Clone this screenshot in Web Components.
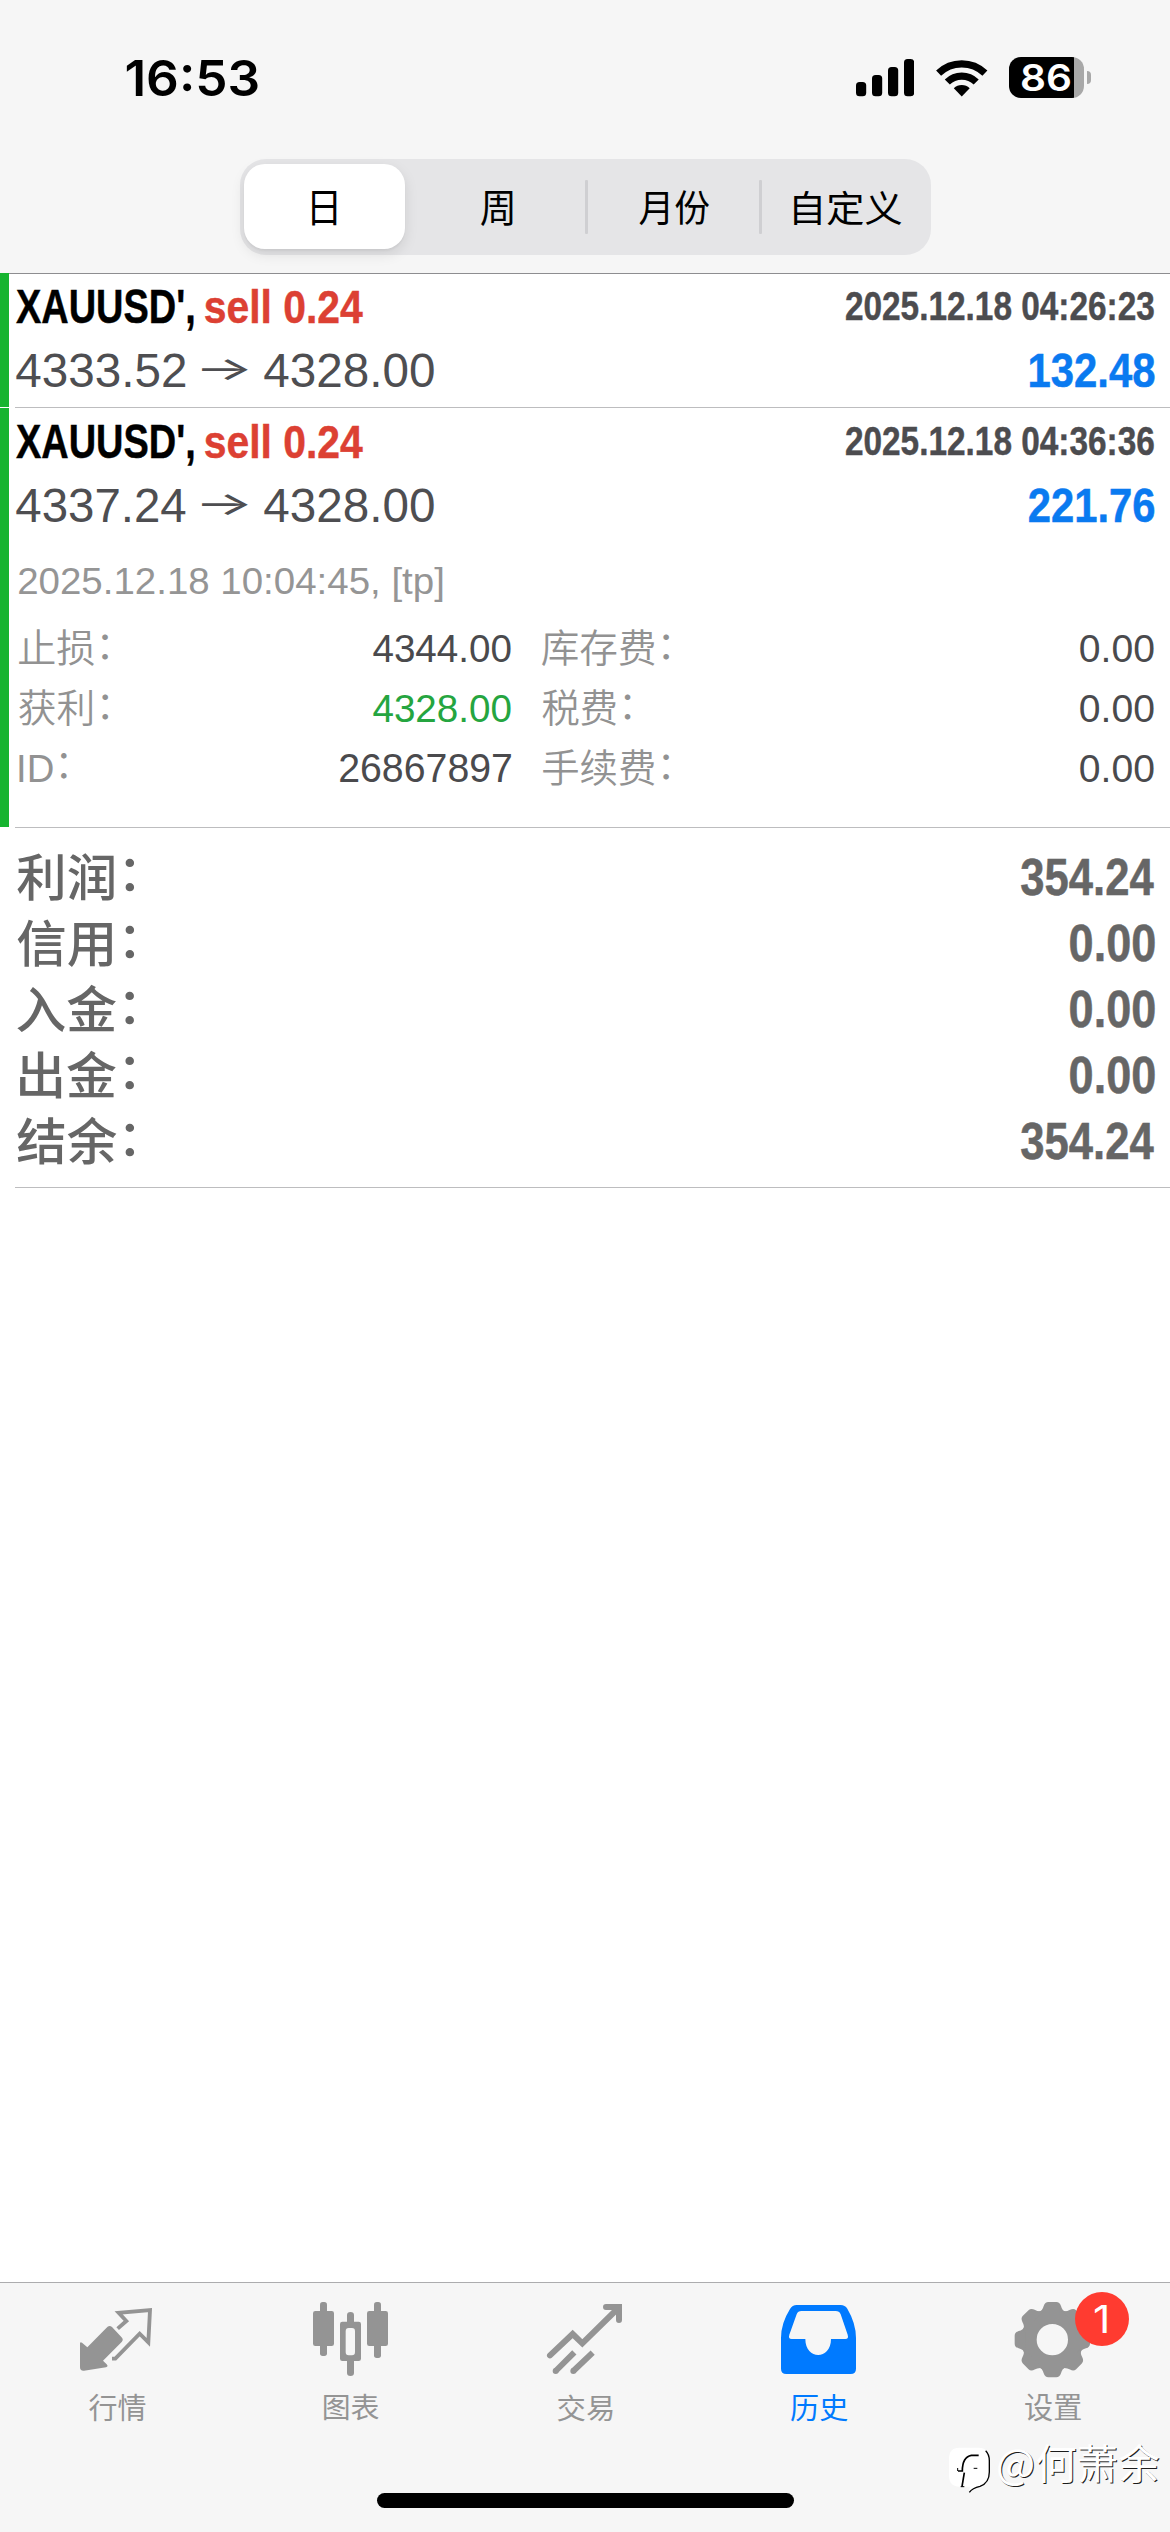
<!DOCTYPE html>
<html lang="zh-CN">
<head>
<meta charset="utf-8">
<title>历史</title>
<style>
html,body{margin:0;padding:0;background:#fff}
body{width:1170px;height:2532px;overflow:hidden;font-family:"Liberation Sans","Noto Sans CJK SC",sans-serif}
</style>
</head>
<body>
<history-app></history-app>
<script>
const define = (name, html, Base = HTMLElement) => {
  const t = document.createElement('template');
  t.innerHTML = html;
  customElements.define(name, class extends Base {
    constructor() {
      super();
      this.attachShadow({ mode: 'open' }).appendChild(t.content.cloneNode(true));
    }
    connectedCallback() { if (this.ready) this.ready(); }
  });
};

/* Text sized by the visible bounds of its glyphs: w and h are the drawn width and height. */
const ctx = document.createElement('canvas').getContext('2d');
class FitText extends HTMLElement {
  ready() {
    const n = k => parseFloat(this.getAttribute(k)) || 0;
    const w = n('w'), h = n('h'), cs = getComputedStyle(this);
    ctx.font = `${cs.fontWeight} 400px ${cs.fontFamily}`;
    const m = ctx.measureText(this.textContent.trim());
    const size = 400 * h / (m.actualBoundingBoxAscent + m.actualBoundingBoxDescent);
    const k = size / 400;
    const sx = w / ((m.actualBoundingBoxLeft + m.actualBoundingBoxRight) * k);
    this.style.width = w + 'px';
    this.style.height = h + 'px';
    this.style.marginLeft = n('ml') + 'px';
    this.style.marginTop = n('mt') + 'px';
    const s = this.shadowRoot.querySelector('span');
    s.style.fontSize = size + 'px';
    const base = this.shadowRoot.querySelector('i').getBoundingClientRect().bottom - s.getBoundingClientRect().top;
    const dx = m.actualBoundingBoxLeft * k * sx, dy = m.actualBoundingBoxAscent * k - base;
    s.style.transform = `translate(${dx}px,${dy}px) scaleX(${sx})`;
  }
}
define('fit-text', `<style>
:host{display:block;flex:none}
span{display:block;width:max-content;white-space:nowrap;line-height:1;transform-origin:0 0}
i{display:inline-block;width:0;height:0}
</style><span><slot></slot><i></i></span>`, FitText);

define('status-bar', `<style>
:host{display:flex;height:159px;align-items:flex-start;box-sizing:border-box;padding:57px 79px 0 125.5px;color:#000;font-family:Inter,sans-serif;font-weight:600}
.r{display:flex;align-items:flex-start;margin-left:auto}
svg{display:block}
.sig{margin:2px 22px 0 0}.wifi{margin:2px 21.5px 0 0}
.bat{display:flex;align-items:center}
.cell{width:75px;height:41px;border-radius:12px;box-sizing:border-box;padding:6.6px 0 0 13.3px;color:#fff;background:linear-gradient(90deg,#000 65px,#a8a8a8 65px)}
.nub{width:4px;height:13px;margin-left:3px;border-radius:0 6px 6px 0;background:#a8a8a8}
</style>
<fit-text w="132" h="37.8" mt="2.2">16:53</fit-text>
<div class="r">
<svg class="sig" width="58.2" height="38"><rect x="0" y="23" width="10.2" height="14.3" rx="3.6"/><rect x="16" y="16" width="10.2" height="21.3" rx="3.6"/><rect x="32" y="8" width="10.2" height="29.3" rx="3.6"/><rect x="48" y="0" width="10.2" height="37.3" rx="3.6"/></svg>
<svg class="wifi" width="51.5" height="38" fill="none" stroke="#000" stroke-width="7.2"><path d="M2.6 14.2A33.4 33.4 0 0 1 48.9 14.2"/><path d="M11.3 23A20.5 20.5 0 0 1 40.2 23"/><path d="M25.75 37.4L17.8 29.2A11.6 11.6 0 0 1 33.7 29.2Z" fill="#000" stroke="none"/></svg>
<div class="bat"><div class="cell"><fit-text w="48.2" h="27.8">86</fit-text></div><div class="nub"></div></div>
</div>`);

define('range-switch', `<style>
:host{display:flex;width:691px;height:96px;margin-left:240px;border-radius:26px;background:#e5e5e7;font-family:"Noto Sans CJK SC",sans-serif;font-weight:400;box-sizing:border-box;padding:5px 4px 6px;color:#000}
.s{display:flex;align-items:flex-start;box-sizing:border-box}
.on{width:160.5px;height:85px;border-radius:21px;background:#fff;box-shadow:0 5px 14px rgba(0,0,0,.1),0 2px 2px rgba(0,0,0,.04)}
.d{width:2.5px;height:54px;margin-top:16px;border-radius:1px;background:#cfcfd2}
</style>
<div class="s on"><fit-text w="24.6" h="34" ml="68.2" mt="26.8">日</fit-text></div>
<div class="s" style="width:180.5px"><fit-text w="31.8" h="34.3" ml="76.6" mt="26.8">周</fit-text></div>
<div class="d"></div>
<div class="s" style="width:171.7px"><fit-text w="70.4" h="35" ml="51.6" mt="26.2">月份</fit-text></div>
<div class="d"></div>
<div class="s"><fit-text w="107.4" h="35" ml="32.4" mt="26.2">自定义</fit-text></div>`);

define('history-card', `<style>
:host{display:flex;width:1170px;height:134px;margin-bottom:1px;box-sizing:border-box;border-left:9px solid #16b42f;background:#fff;background-clip:padding-box}
.b{flex:1}
.row{display:flex;align-items:flex-start;padding:0 16px 0 6.7px}
.top{height:63.7px;padding-top:16.3px}
.mid{height:83px}
.sp{flex:1}
.cond{font-family:"Liberation Sans Narrow","Liberation Sans",sans-serif;font-weight:700;-webkit-text-stroke:.45px currentColor}
.px{color:#4e4e51}
.arrow{font-family:Inter,sans-serif;font-weight:400}
</style>
<div class="b">
<div class="row top cond"><slot name="symbol"></slot><slot name="side"></slot><div class="sp"></div><slot name="time"></slot></div>
<div class="row mid px"><slot name="open"></slot><fit-text class="arrow" w="45.9" h="21" ml="16.5" mt="6.3">→</fit-text><slot name="close"></slot><div class="sp"></div><slot name="profit"></slot></div>
<slot></slot>
</div>`);

define('detail-grid', `<style>
:host{display:grid;grid-template-columns:491.9px 612.7px;column-gap:30.3px;grid-auto-rows:60px;padding:28.3px 0 0 10.4px;color:#4a4a4d}
</style><slot></slot>`);
define('detail-cell', `<style>
:host{display:flex;justify-content:space-between;align-items:flex-start}
::slotted([slot=label]){color:#929292;font-weight:350}
</style><slot name="label"></slot><slot></slot>`);
define('summary-row', `<style>
:host{display:flex;justify-content:space-between;align-items:flex-start;height:66px;padding:0 16px 0 16.5px;color:#666}
</style><slot name="label"></slot><slot></slot>`);
define('hair-line', `<style>:host{display:block;height:1px;margin-left:15px;background:#bdbdbf}</style>`);

define('tab-item', `<style>
:host{display:flex;flex-direction:column;align-items:center;width:234px;color:#949494;fill:currentColor;font-family:"Noto Sans CJK SC",sans-serif}
:host([active]){color:#007aff}
</style><slot name="icon"></slot><slot></slot>`);

define('tab-bar', `<style>
:host{display:flex;position:relative;height:210px;border-top:1px solid #acacae;background:#f6f6f6}
svg{display:block;flex:none}
.badge{position:absolute;left:1075px;top:9px;width:54px;height:54px;border-radius:50%;background:#ff3b30;color:#fff;font-family:Inter,sans-serif;font-weight:400;display:flex;align-items:flex-start}
</style>
<tab-item>
<svg slot="icon" width="234" height="100" viewBox="0 69 702 300"><path d="M240 250Q241 244 246 248L262 262L319 204Q327 194 336 201L364 231Q372 238 365 246L309 302L320 313Q326 319 318 322L252 332Q240 333 240 322Z"/><path d="M353 206L379 183L356 158.500L450 150L445 247L419 221L346 296L336 296" fill="none" stroke="currentColor" stroke-width="11.500"/></svg>
<fit-text w="56.6" h="27.3" mt="11">行情</fit-text></tab-item>
<tab-item>
<svg slot="icon" width="234" height="100" viewBox="702 69 702 300"><rect x="939" y="153" width="63" height="105" rx="7"/><rect x="960" y="126" width="21" height="162" rx="8"/><path fill-rule="evenodd" d="M1027 185H1076Q1083 185 1083 192V296Q1083 303 1076 303H1027Q1020 303 1020 296V192Q1020 185 1027 185ZM1046 204Q1037 204 1037 214V276Q1037 286 1046 286H1056Q1065 286 1065 276V214Q1065 204 1056 204Z"/><path d="M1041 187V165Q1041 156 1051.500 156T1062 165V187ZM1041 300V339Q1041 348 1051.500 348T1062 339V300Z"/><rect x="1101" y="153" width="63" height="105" rx="7"/><rect x="1122" y="126" width="21" height="168" rx="8"/></svg>
<fit-text w="54.6" h="27" mt="11">图表</fit-text></tab-item>
<tab-item>
<svg slot="icon" width="234" height="100" viewBox="144 69 702 300"><g fill="none" stroke="currentColor" stroke-width="18"><path d="M390 286L458 222L487 250L595 144" stroke-linecap="round" stroke-linejoin="miter"/><path d="M558 141H597V180" stroke-linecap="round"/><path d="M407 333L463 277M460 333L518 278"/></g><circle cx="407" cy="333" r="9"/><circle cx="460" cy="333" r="9"/></svg>
<fit-text w="54.7" h="27.3" mt="11">交易</fit-text></tab-item>
<tab-item active>
<svg slot="icon" width="234" height="100" viewBox="846 69 702 300"><path fill-rule="evenodd" d="M1130 135H1262Q1275 135 1282 146Q1308 190 1308 234V326Q1308 342 1292 342H1099Q1083 342 1083 326V234Q1083 190 1110 147Q1117 135 1130 135ZM1144 153Q1134 153 1130 163L1108 224Q1104 237 1115 237H1156C1156 301 1233 301 1233 237H1276Q1287 237 1283 224L1262 163Q1258 153 1247 153Z"/></svg>
<fit-text w="56.4" h="27.3" mt="11">历史</fit-text></tab-item>
<tab-item>
<svg slot="icon" width="234" height="100" viewBox="198 69 702 300"><defs><path id="t" d="M-42 -80Q-29 -88 -26 -101Q-22 -113 -12 -113H12Q22 -113 26 -101Q29 -88 42 -80Z"/></defs><g transform="translate(547 239)"><circle r="70" fill="none" stroke="currentColor" stroke-width="46"/><use href="#t"/><use href="#t" transform="rotate(45)"/><use href="#t" transform="rotate(90)"/><use href="#t" transform="rotate(135)"/><use href="#t" transform="rotate(180)"/><use href="#t" transform="rotate(225)"/><use href="#t" transform="rotate(270)"/><use href="#t" transform="rotate(315)"/></g></svg>
<fit-text w="56" h="27" mt="11">设置</fit-text></tab-item>
<div class="badge"><fit-text w="12" h="28.3" ml="20" mt="12.500">1</fit-text></div>`);

define('home-indicator', `<style>
:host{display:block;height:15px;width:417px;margin:0 0 24px 377px;border-radius:8px;background:#000}
</style>`);

define('author-mark', `<style>
:host{position:absolute;left:948px;top:2444px;display:flex;align-items:flex-start;color:#fff;font-family:"Noto Sans CJK SC",sans-serif;font-weight:400}
svg{display:block;margin-top:2px}
fit-text{text-shadow:1px 1px 0 #1c1c1c}
</style>
<svg width="44" height="48" viewBox="0 0 132 144"><path fill="#fff" d="M34 5H92Q123 5 124 40V82Q124 118 90 122L62 141L66 122H34Q3 122 3 88V38Q3 5 34 5Z"/><g fill="none" stroke="#000"><path stroke-width="4" d="M113 14Q124 25 124 44V78Q124 111 96 121Q73 126 64 139"/><path stroke-width="5" d="M30 75H43Q43 33 70 28H92"/><path stroke-width="5" d="M49 80L42 122"/><path stroke-width="3" d="M77 67H88M29 66V75M38 122H49"/></g></svg>
<fit-text w="161" h="42.500" ml="6">@何萧余</fit-text>`);

define('history-app', `<style>
:host{display:flex;flex-direction:column;position:relative;width:1170px;height:2532px;background:#fff;overflow:hidden}
header{height:273px;background:#f6f6f6;flex:none}
.edge{height:1px;margin:0 0 -1px 9px;background:#8d8d90;z-index:1}
main{display:flex;flex-direction:column;flex:1}
history-card,hair-line{flex:none}
hair-line{margin-top:-1px}
.sum{padding-top:25px;height:334px;flex:none;font-family:"Noto Sans CJK SC",sans-serif;font-weight:500}
.n{font-family:"Liberation Sans Narrow","Liberation Sans",sans-serif;font-weight:700;-webkit-text-stroke:.5px currentColor}
.blue{color:#0a7af0}.red{color:#dc4033}.dark{color:#4c4c4f}.green{color:#25a540}.k{color:#000}
.tp{color:#959595}
b{font-weight:inherit;line-height:0;vertical-align:.085em}
footer{background:#f6f6f6;flex:none}
</style>
<header><status-bar></status-bar><range-switch></range-switch></header>
<main>
<div class="edge"></div>
<history-card>
<fit-text slot="symbol" class="k" w="177.500" h="41.700">XAUUSD',</fit-text>
<fit-text slot="side" class="red" w="158" h="35" ml="12.300" mt="0.200">sell 0.24</fit-text>
<fit-text slot="time" class="dark" w="308" h="28.600" mt="3">2025.12.18 04:26:23</fit-text>
<fit-text slot="open" w="169.500" h="34.500">4333.52</fit-text>
<fit-text slot="close" w="170.300" h="34.500" ml="16.400">4328.00</fit-text>
<fit-text slot="profit" class="n blue" w="124.500" h="34.700">132.48</fit-text>
</history-card>
<hair-line></hair-line>
<history-card style="height:419px">
<fit-text slot="symbol" class="k" w="177.500" h="41.700">XAUUSD',</fit-text>
<fit-text slot="side" class="red" w="158" h="35" ml="12.300" mt="0.200">sell 0.24</fit-text>
<fit-text slot="time" class="dark" w="308" h="28.600" mt="3">2025.12.18 04:36:36</fit-text>
<fit-text slot="open" w="169.500" h="34.500">4337.24</fit-text>
<fit-text slot="close" w="170.300" h="34.500" ml="16.400">4328.00</fit-text>
<fit-text slot="profit" class="n blue" w="125.500" h="34.700">221.76</fit-text>
<fit-text class="tp" w="423.600" h="36" ml="9.800" mt="-5.300">2025.12.18 10:04:45, [tp]</fit-text>
<detail-grid>
<detail-cell><fit-text slot="label" w="89.200" h="36">止损<b>：</b></fit-text><fit-text w="138.100" h="28.300" mt="4.300">4344.00</fit-text></detail-cell>
<detail-cell><fit-text slot="label" w="127.200" h="36">库存费<b>：</b></fit-text><fit-text w="74" h="28.300" mt="4.300">0.00</fit-text></detail-cell>
<detail-cell><fit-text slot="label" w="89.200" h="36">获利<b>：</b></fit-text><fit-text class="green" w="138.100" h="28.300" mt="4.300">4328.00</fit-text></detail-cell>
<detail-cell><fit-text slot="label" w="88.500" h="36">税费<b>：</b></fit-text><fit-text w="74" h="28.300" mt="4.300">0.00</fit-text></detail-cell>
<detail-cell><fit-text slot="label" w="47.800" h="28.300" mt="4.300">ID<b>：</b></fit-text><fit-text w="171.400" h="28.600" mt="4.300">26867897</fit-text></detail-cell>
<detail-cell><fit-text slot="label" w="126" h="36" ml="1.200">手续费<b>：</b></fit-text><fit-text w="74" h="28.300" mt="4.300">0.00</fit-text></detail-cell>
</detail-grid>
</history-card>
<hair-line></hair-line>
<section class="sum">
<summary-row><fit-text slot="label" w="117.500" h="47.300">利润<b>：</b></fit-text><fit-text class="n" w="133" h="36.700" mt="6">354.24</fit-text></summary-row>
<summary-row><fit-text slot="label" w="117.500" h="47.500">信用<b>：</b></fit-text><fit-text class="n" w="84.500" h="36.700" mt="6">0.00</fit-text></summary-row>
<summary-row><fit-text slot="label" w="117.500" h="46.700">入金<b>：</b></fit-text><fit-text class="n" w="84.500" h="36.700" mt="6">0.00</fit-text></summary-row>
<summary-row><fit-text slot="label" w="114.500" h="47.300" ml="3" mt="-0.300">出金<b>：</b></fit-text><fit-text class="n" w="84.500" h="36.700" mt="6">0.00</fit-text></summary-row>
<summary-row><fit-text slot="label" w="117.500" h="47.600" mt="-0.300">结余<b>：</b></fit-text><fit-text class="n" w="133" h="36.700" mt="6">354.24</fit-text></summary-row>
</section>
<hair-line style="margin-top:0"></hair-line>
</main>
<footer><tab-bar></tab-bar><home-indicator></home-indicator></footer>
<author-mark></author-mark>`);
</script>
</body>
</html>
